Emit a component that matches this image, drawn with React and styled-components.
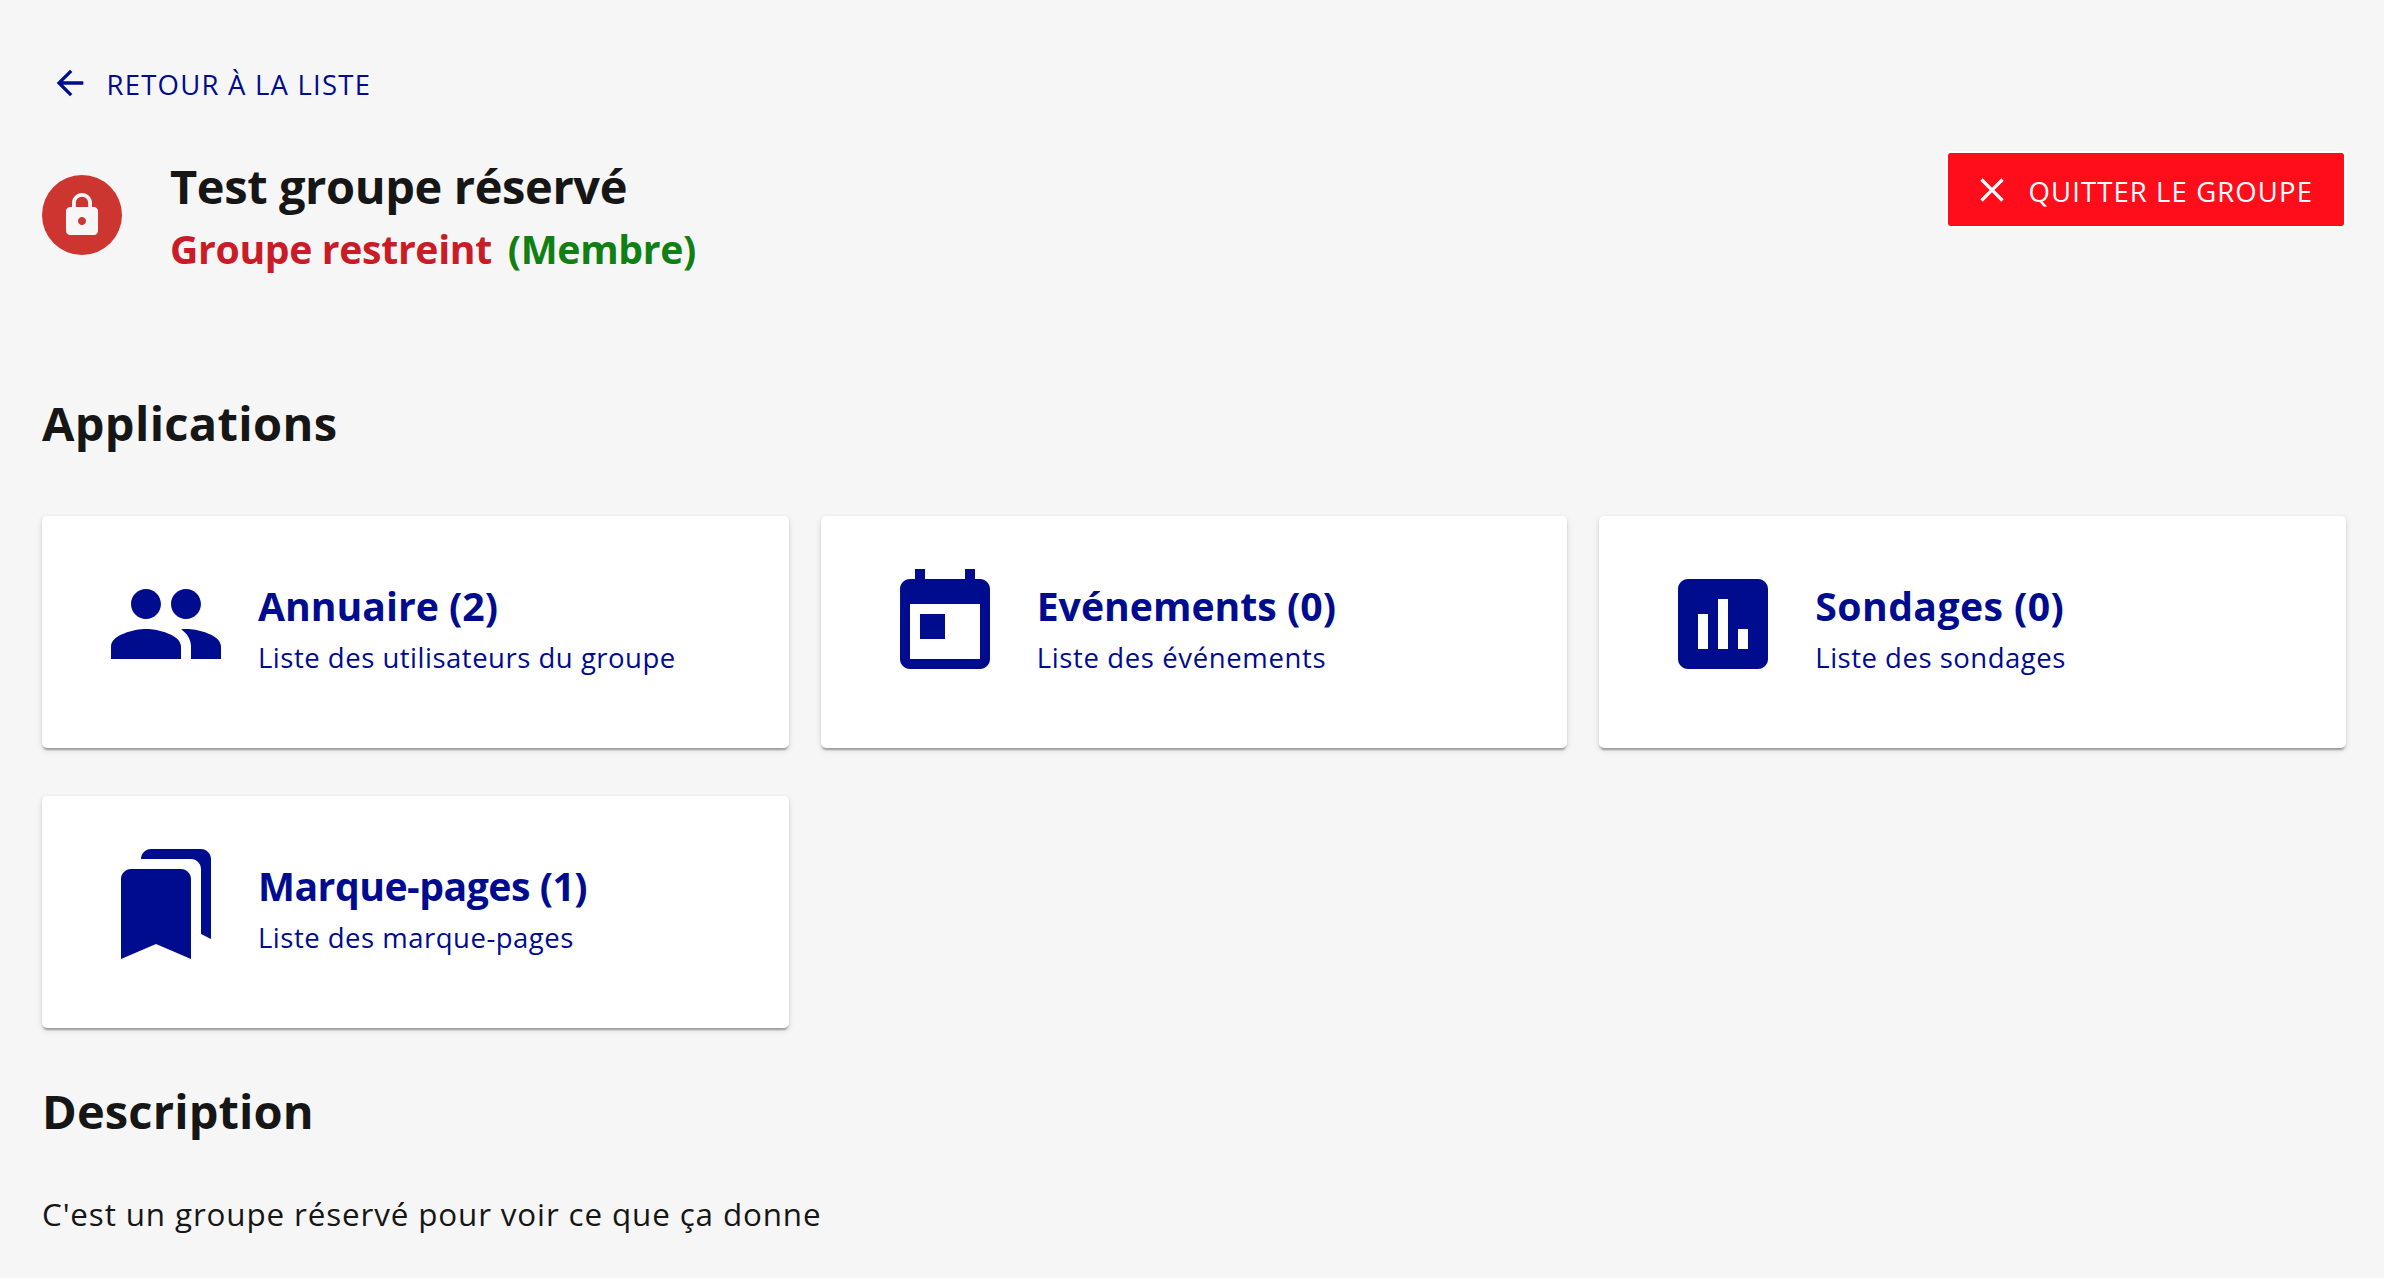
import React from "react";
import styled, { createGlobalStyle } from "styled-components";

const color = {
  background: "#f6f6f6",
  text: "#161616",
  blue: "#000c8e",
  danger: "#ff0d1b",
  avatar: "#cd3530",
  restricted: "#c91c27",
  member: "#118014",
};

const GlobalStyle = createGlobalStyle`
  *, *::before, *::after { box-sizing: border-box; }
  body {
    margin: 0;
    background: ${color.background};
    color: ${color.text};
    font-family: "Open Sans", "Noto Sans", sans-serif;
  }
`;

const Page = styled.main`
  min-height: 1278px;
  padding: 63px 38px 0 42px;
`;

const Icon = styled.svg`
  display: block;
  flex: none;
  width: ${(p) => p.$size}px;
  height: ${(p) => p.$size}px;
  fill: currentColor;
`;

const BackLink = styled.a`
  display: flex;
  align-items: flex-start;
  gap: 16.5px;
  width: fit-content;
  height: 40px;
  margin-left: 8px;
  color: ${color.blue};
  text-decoration: none;
`;

const ButtonLabel = styled.span`
  margin-top: 2px;
  font-size: 27.5px;
  line-height: 40px;
  letter-spacing: ${(p) => p.$spacing}px;
  white-space: nowrap;
  text-transform: uppercase;
`;

const Header = styled.header`
  display: flex;
  align-items: flex-start;
  height: 242px;
  margin-top: 48px;
`;

const Avatar = styled.div`
  display: grid;
  place-items: center;
  width: 80px;
  height: 80px;
  margin-top: 24px;
  border-radius: 50%;
  background: ${color.avatar};
  color: ${color.background};
`;

const Titles = styled.div`
  flex: 1;
  padding: 5px 0 0 48px;
`;

const Heading = styled.h1`
  margin: 0;
  font-size: 47px;
  font-weight: 700;
  line-height: 60px;
  letter-spacing: ${(p) => p.$spacing}px;
`;

const Status = styled.div`
  display: flex;
  gap: 16px;
  margin-top: 3px;
  font-size: 39.2px;
  font-weight: 700;
  line-height: 60px;
  letter-spacing: -0.35px;
`;

const StatusPart = styled.span`
  color: ${(p) => p.$color};
`;

const LeaveButton = styled.button`
  display: flex;
  align-items: flex-start;
  gap: 16.5px;
  width: 400px;
  height: 77px;
  padding: 17px 24px 0;
  border: 2px solid #fff;
  border-radius: 4px;
  background: ${color.danger};
  background-clip: padding-box;
  color: #fff;
  font-family: inherit;
`;

const Grid = styled.section`
  display: grid;
  grid-template-columns: repeat(3, 1fr);
  grid-auto-rows: 232px;
  gap: 48px 32px;
  margin: 63px 0 53px;
`;

const Card = styled.article`
  display: flex;
  gap: 32px;
  padding: 48px 64px 0;
  border-radius: 5px;
  background: #fff;
  color: ${color.blue};
  box-shadow:
    0 4px 2px -2px rgba(0, 0, 0, 0.2),
    0 2px 2px rgba(0, 0, 0, 0.14),
    0 2px 6px rgba(0, 0, 0, 0.12);
`;

const CardText = styled.div`
  padding-top: 17px;
  white-space: nowrap;
`;

const CardTitle = styled.h2`
  margin: 0;
  font-size: 39.2px;
  font-weight: 700;
  line-height: 50px;
  letter-spacing: ${(p) => p.$spacing}px;
`;

const CardSubtitle = styled.p`
  margin: 7px 0 0;
  font-size: 27.5px;
  line-height: 40px;
  letter-spacing: ${(p) => p.$spacing}px;
`;

const Description = styled.p`
  margin: 49px 0 0;
  font-size: 31.4px;
  line-height: 48px;
  letter-spacing: 0.86px;
`;

const paths = {
  back: "M20 11H7.83l5.59-5.59L12 4l-8 8 8 8 1.41-1.41L7.83 13H20v-2z",
  lock: "M18 8h-1V6c0-2.76-2.24-5-5-5S7 3.24 7 6v2H6c-1.1 0-2 .9-2 2v10c0 1.1.9 2 2 2h12c1.1 0 2-.9 2-2V10c0-1.1-.9-2-2-2zm-6 9c-1.1 0-2-.9-2-2s.9-2 2-2 2 .9 2 2-.9 2-2 2zm3.1-9H8.9V6c0-1.71 1.39-3.1 3.1-3.1 1.71 0 3.1 1.39 3.1 3.1v2z",
  close: "M19 6.41L17.59 5 12 10.59 6.41 5 5 6.41 10.59 12 5 17.59 6.41 19 12 13.41 17.59 19 19 17.59 13.41 12z",
  people: "M16 11c1.66 0 2.99-1.34 2.99-3S17.66 5 16 5c-1.66 0-3 1.34-3 3s1.34 3 3 3zm-8 0c1.66 0 2.99-1.34 2.99-3S9.66 5 8 5C6.34 5 5 6.34 5 8s1.34 3 3 3zm0 2c-2.33 0-7 1.17-7 3.5V19h14v-2.5c0-2.33-4.67-3.5-7-3.5zm8 0c-.29 0-.62.02-.97.05 1.16.84 1.97 1.97 1.97 3.45V19h6v-2.5c0-2.33-4.67-3.5-7-3.5z",
  today: "M19 3h-1V1h-2v2H8V1H6v2H5c-1.11 0-1.99.9-1.99 2L3 19c0 1.1.89 2 2 2h14c1.1 0 2-.9 2-2V5c0-1.1-.9-2-2-2zm0 16H5V8h14v11zM7 10h5v5H7z",
  poll: "M19 3H5c-1.1 0-2 .9-2 2v14c0 1.1.9 2 2 2h14c1.1 0 2-.9 2-2V5c0-1.1-.9-2-2-2zM9 17H7v-7h2v7zm4 0h-2V7h2v10zm4 0h-2v-4h2v4z",
  bookmarks: "M19 18l2 1V3c0-1.1-.9-2-2-2H8.99C7.89 1 7 1.9 7 3h10c1.1 0 2 .9 2 2v13zM15 5H5c-1.1 0-2 .9-2 2v16l7-3 7 3V7c0-1.1-.9-2-2-2z",
};

function MaterialIcon({ name, size }) {
  return (
    <Icon $size={size} viewBox="0 0 24 24" aria-hidden="true">
      <path d={paths[name]} />
    </Icon>
  );
}

const applications = [
  { icon: "people", title: "Annuaire (2)", subtitle: "Liste des utilisateurs du groupe", spacing: 0, subSpacing: 0.51 },
  { icon: "today", title: "Evénements (0)", subtitle: "Liste des événements", spacing: 0, subSpacing: 0.63 },
  { icon: "poll", title: "Sondages (0)", subtitle: "Liste des sondages", spacing: 0.4, subSpacing: 0.5 },
  { icon: "bookmarks", title: "Marque-pages (1)", subtitle: "Liste des marque-pages", spacing: -0.5, subSpacing: 0.5 },
];

export default function App() {
  return (
    <Page>
      <GlobalStyle />
      <BackLink>
        <MaterialIcon name="back" size={40} />
        <ButtonLabel $spacing={1.22}>Retour à la liste</ButtonLabel>
      </BackLink>
      <Header>
        <Avatar>
          <MaterialIcon name="lock" size={48} />
        </Avatar>
        <Titles>
          <Heading $spacing={-0.4}>Test groupe réservé</Heading>
          <Status>
            <StatusPart $color={color.restricted}>Groupe restreint</StatusPart>
            <StatusPart $color={color.member}>(Membre)</StatusPart>
          </Status>
        </Titles>
        <LeaveButton>
          <MaterialIcon name="close" size={40} />
          <ButtonLabel $spacing={1.1}>Quitter le groupe</ButtonLabel>
        </LeaveButton>
      </Header>
      <Heading as="h2" $spacing={0.35}>Applications</Heading>
      <Grid>
        {applications.map((app) => (
          <Card key={app.icon}>
            <MaterialIcon name={app.icon} size={120} />
            <CardText>
              <CardTitle $spacing={app.spacing}>{app.title}</CardTitle>
              <CardSubtitle $spacing={app.subSpacing}>{app.subtitle}</CardSubtitle>
            </CardText>
          </Card>
        ))}
      </Grid>
      <Heading as="h2" $spacing={0.15}>Description</Heading>
      <Description>C'est un groupe réservé pour voir ce que ça donne</Description>
    </Page>
  );
}
